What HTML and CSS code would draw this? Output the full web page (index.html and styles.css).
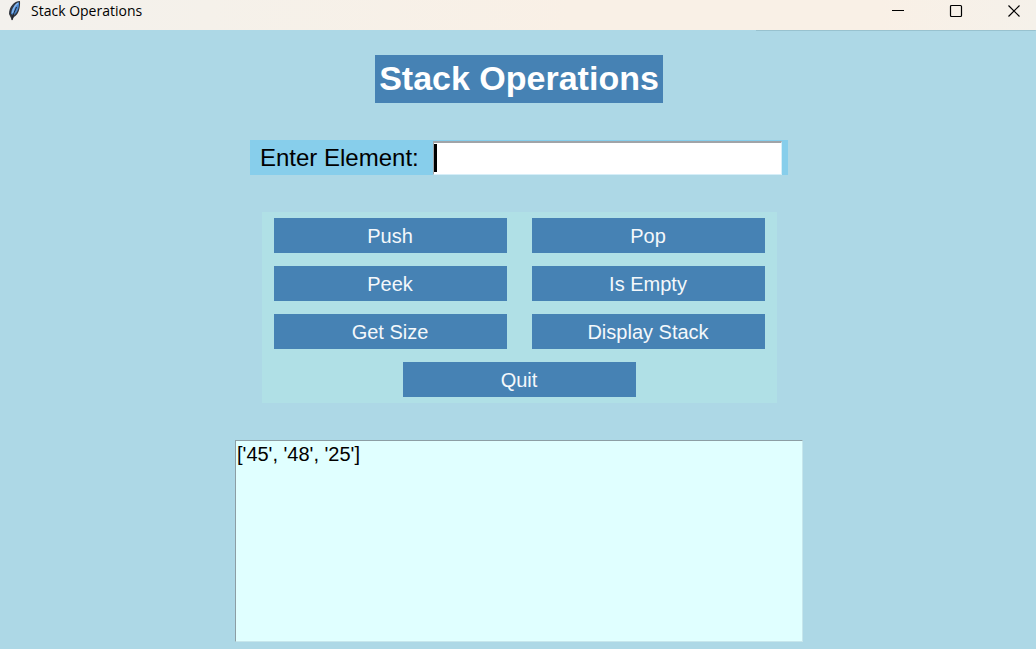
FILE: index.html
```html
<!DOCTYPE html>
<html lang="en">
<head>
<meta charset="utf-8">
<meta name="viewport" content="width=device-width, initial-scale=1">
<title>Stack Operations</title>
<link rel="stylesheet" href="styles.css">
</head>
<body>
<header class="titlebar">
  <svg class="app-icon" viewBox="0 0 16 20" aria-hidden="true">
    <path d="M13 0 C7 0 2 6 2 13 L3.500 16 L5 19.500 L7 16 C11 14 13.500 8 13 0 Z" fill="#30353e"/>
    <path d="M12 1 C8 3 4 8 4 13 L7 14 C10 12 12.500 7 12 1 Z" fill="#4a86cc"/>
    <path d="M11 2 C8 4.500 6 8 5.500 12" fill="none" stroke="#8abaf0" stroke-width="1.500"/>
    <path d="M9.500 6 C8 10 6 13 5 19" fill="none" stroke="#20252e" stroke-width="1"/>
  </svg>
  <span class="window-title">Stack Operations</span>
  <div class="window-controls">
    <button class="window-button" type="button" aria-label="Minimize">
      <svg class="control-icon" viewBox="0 0 14 14"><path d="M1 6.500H13" stroke="#000"/></svg>
    </button>
    <button class="window-button" type="button" aria-label="Maximize">
      <svg class="control-icon" viewBox="0 0 14 14"><rect x="1.500" y="1.500" width="11" height="11" rx="1" fill="none" stroke="#000" stroke-width="1.200"/></svg>
    </button>
    <button class="window-button" type="button" aria-label="Close">
      <svg class="control-icon" viewBox="0 0 14 14"><path d="M1.500 1.500L12.500 12.500M12.500 1.500L1.500 12.500" stroke="#000" stroke-width="1.200"/></svg>
    </button>
  </div>
</header>
<main class="content">
  <h1 class="heading">Stack Operations</h1>
  <div class="entry-row">
    <label class="entry-label" for="element">Enter Element:</label>
    <div class="entry-field">
      <input class="entry-input" id="element" type="text">
      <span class="caret"></span>
    </div>
  </div>
  <div class="button-panel">
    <button class="action" type="button">Push</button>
    <button class="action" type="button">Pop</button>
    <button class="action" type="button">Peek</button>
    <button class="action" type="button">Is Empty</button>
    <button class="action" type="button">Get Size</button>
    <button class="action" type="button">Display Stack</button>
    <button class="action action-quit" type="button">Quit</button>
  </div>
  <textarea class="output" rows="8" aria-label="Output">['45', '48', '25']</textarea>
</main>
</body>
</html>
```
FILE: styles.css
```css
* {
  box-sizing: border-box;
}

body {
  margin: 0;
  min-height: 100vh;
  background: #add8e6;
  font-family: "Liberation Sans", Arial, sans-serif;
  color: #000;
}

.titlebar {
  display: flex;
  align-items: center;
  height: 30px;
  padding: 0 0 8px 7px;
  background: linear-gradient(90deg, #f3f1ed 0%, #f5f1ea 20%, #f9f0e6 55%, #f9f0e6 85%, #f5f1ea 100%);
}

.app-icon {
  width: 16px;
  height: 20px;
}

.window-title {
  margin-left: 8px;
  font-family: "Open Sans", "Noto Sans", sans-serif;
  font-size: 14px;
  line-height: 20px;
}

.window-controls {
  display: flex;
  gap: 14px;
  margin-left: auto;
}

.window-button {
  display: flex;
  align-items: center;
  justify-content: center;
  width: 44px;
  height: 22px;
  padding: 0;
  border: 0;
  background: transparent;
}

.control-icon {
  width: 14px;
  height: 14px;
}

.content {
  display: flex;
  flex-direction: column;
  align-items: center;
  padding: 25px 0 6px 2px;
  background: linear-gradient(#98c2cf, #98c2cf) right top / 27% 1px no-repeat;
}

.heading {
  margin: 0;
  padding: 3px 4px 5px;
  background: #4682b4;
  color: #fff;
  font-size: 34px;
  line-height: 40px;
}

.entry-row {
  display: flex;
  align-items: center;
  width: 538px;
  max-width: 100%;
  margin-top: 37px;
  padding: 1px 6px 0 10px;
  background: #87ceeb;
}

.entry-label {
  font-size: 24px;
  line-height: 34px;
}

.entry-field {
  position: relative;
  flex: 1;
  margin-left: 14px;
}

.entry-input {
  display: block;
  width: 100%;
  height: 34px;
  padding: 0 4px;
  border: 1px solid #d6eef8;
  border-top: 2px solid #a0a4a8;
  border-left-color: #a0a4a8;
  background: #fff;
  font: inherit;
  font-size: 24px;
  outline: 0;
}

.caret {
  position: absolute;
  top: 3px;
  left: 1px;
  width: 3px;
  height: 28px;
  background: #000;
}

.button-panel {
  display: grid;
  grid-template-columns: 1fr 1fr;
  gap: 13px 25px;
  width: 515px;
  max-width: 100%;
  margin-top: 37px;
  padding: 6px 12px;
  background: #b0e0e6;
}

.action {
  height: 35px;
  padding: 2px 0 0;
  border: 0;
  background: #4682b4;
  color: #f4f8fb;
  font: inherit;
  font-size: 20px;
}

.action-quit {
  grid-column: 1 / -1;
  justify-self: center;
  width: 233px;
}

.output {
  display: block;
  width: 568px;
  max-width: 100%;
  height: 202px;
  margin: 37px 0 0;
  padding: 2px 1px;
  border: 1px solid #c6e6ec;
  border-top-color: #8c9ea4;
  border-left-color: #8c9ea4;
  background: #e0ffff;
  color: #000;
  font: inherit;
  font-size: 20px;
  line-height: 23px;
  resize: none;
  outline: 0;
}
```
